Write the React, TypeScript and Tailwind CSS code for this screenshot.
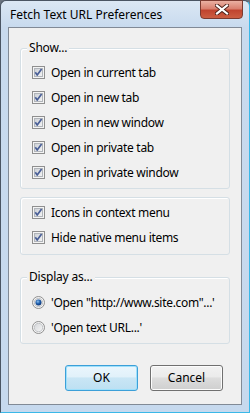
import React from "react";

const font = { fontFamily: '"Noto Sans", "Open Sans", sans-serif' };

function CheckBox() {
  return (
    <svg width="13" height="13" viewBox="0 0 13 13" className="shrink-0">
      <defs>
        <linearGradient id="cbg" x1="0" y1="0" x2="1" y2="1">
          <stop offset="0" stopColor="#cbcfd5" />
          <stop offset="1" stopColor="#f6f6f6" />
        </linearGradient>
      </defs>
      <rect x="0.5" y="0.5" width="12" height="12" fill="#f4f4f4" stroke="#8f8f8f" />
      <rect x="2.5" y="2.5" width="8" height="8" fill="url(#cbg)" stroke="#b1b5ba" />
      <path d="M3.3 6.3 L5.2 9 L9.6 3" fill="none" stroke="#4a5f97" strokeWidth="1.7" strokeLinejoin="round" />
    </svg>
  );
}

function Radio({ checked }: { checked?: boolean }) {
  return (
    <svg width="13" height="13" viewBox="0 0 13 13" className="shrink-0">
      <defs>
        <linearGradient id="rbg" x1="0" y1="0" x2="1" y2="1">
          <stop offset="0" stopColor="#d4d6d9" />
          <stop offset="1" stopColor="#f7f7f7" />
        </linearGradient>
        <radialGradient id="rdot" cx="0.4" cy="0.35" r="0.7">
          <stop offset="0" stopColor="#8fc1ef" />
          <stop offset="0.5" stopColor="#1e5fae" />
          <stop offset="1" stopColor="#0b2f6b" />
        </radialGradient>
      </defs>
      <circle cx="6.5" cy="6.5" r="6" fill="#f4f4f4" stroke="#8f8f8f" />
      <circle cx="6.5" cy="6.5" r="4.2" fill="url(#rbg)" stroke="#b7babe" strokeWidth="0.8" />
      {checked && <circle cx="6.5" cy="6.5" r="3" fill="url(#rdot)" />}
    </svg>
  );
}

function Row({ children, control }: { children: React.ReactNode; control: React.ReactNode }) {
  return (
    <div className="flex items-center h-[25px] pl-[11px]">
      {control}
      <span className="ml-[6px] text-[12px] tracking-[-0.3px] text-black leading-none">{children}</span>
    </div>
  );
}

function Group({ label, children, className }: { label?: string; children: React.ReactNode; className?: string }) {
  return (
    <div className={"relative mx-[11px] border border-[#d5dfe5] rounded-[3px] shadow-[inset_1px_1px_0_#ffffff] " + (className ?? "")}>
      {label && (
        <span className="absolute left-[6px] top-[-9px] bg-[#f0f0f0] px-[2px] text-[12px] tracking-[-0.2px] leading-[16px] text-black">
          {label}
        </span>
      )}
      {children}
    </div>
  );
}

function Button({ children, def }: { children: React.ReactNode; def?: boolean }) {
  return (
    <div
      className={
        "w-[73px] h-[26px] rounded-[3px] border flex items-center justify-center text-[12px] text-black " +
        (def
          ? "border-[#3c9fd8] shadow-[inset_0_0_0_1px_#9ee0fb] bg-[linear-gradient(#eaf6fd_0%,#e1f1fa_45%,#c9e6f5_50%,#bde0f2_100%)]"
          : "border-[#707070] shadow-[inset_0_0_0_1px_#fcfcfc] bg-[linear-gradient(#f2f2f2_0%,#ebebeb_45%,#dddddd_50%,#cfcfcf_100%)]")
      }
    >
      {children}
    </div>
  );
}

export default function App() {
  return (
    <div style={font} className="w-[250px] h-[413px] bg-[#6b7480]">
      <div className="w-[250px] h-[413px] flex flex-col border border-[#4a5563] border-r-[#3ab8e8] border-b-[#3ab8e8] rounded-t-[6px] bg-[linear-gradient(#dbe7f4_0px,#c8daee_26px,#c6d9ee_100%)]">
        <div className="h-[26px] flex items-start shrink-0">
          <span className="ml-[9px] mt-[6px] text-[12px] leading-[16px] text-black">Fetch Text URL Preferences</span>
          <div className="ml-auto mr-[6px] w-[43px] h-[19px] mt-[-1px] rounded-b-[4px] border border-[#7b3a30] bg-[linear-gradient(#eab0a2_0%,#d9806f_45%,#c0442f_55%,#cc5e42_100%)] flex items-center justify-center">
            <svg width="14" height="11" viewBox="0 0 14 11">
              <path d="M2 1.5 L12 9.5 M12 1.5 L2 9.5" stroke="#4a1f18" strokeWidth="4" strokeLinecap="square" />
              <path d="M2 1.5 L12 9.5 M12 1.5 L2 9.5" stroke="#ffffff" strokeWidth="2.2" strokeLinecap="square" />
            </svg>
          </div>
        </div>
        <div className="ml-[7px] mr-[7px] h-[378px] border border-[#818a96] bg-[#f0f0f0] flex flex-col">
          <Group label="Show..." className="mt-[20px] h-[141px] pt-[11px]">
            <Row control={<CheckBox />}>Open in current tab</Row>
            <Row control={<CheckBox />}>Open in new tab</Row>
            <Row control={<CheckBox />}>Open in new window</Row>
            <Row control={<CheckBox />}>Open in private tab</Row>
            <Row control={<CheckBox />}>Open in private window</Row>
          </Group>
          <Group className="mt-[8px] h-[58px] pt-[2px]">
            <Row control={<CheckBox />}>Icons in context menu</Row>
            <Row control={<CheckBox />}>Hide native menu items</Row>
          </Group>
          <Group label="Display as..." className="mt-[22px] h-[67px] pt-[12px]">
            <Row control={<Radio checked />}>'Open "http://www.site.com"...'</Row>
            <Row control={<Radio />}>'Open text URL...'</Row>
          </Group>
          <div className="flex mt-[21px] ml-[56px] gap-[12px]">
            <Button def>OK</Button>
            <Button>Cancel</Button>
          </div>
        </div>
      </div>
    </div>
  );
}
